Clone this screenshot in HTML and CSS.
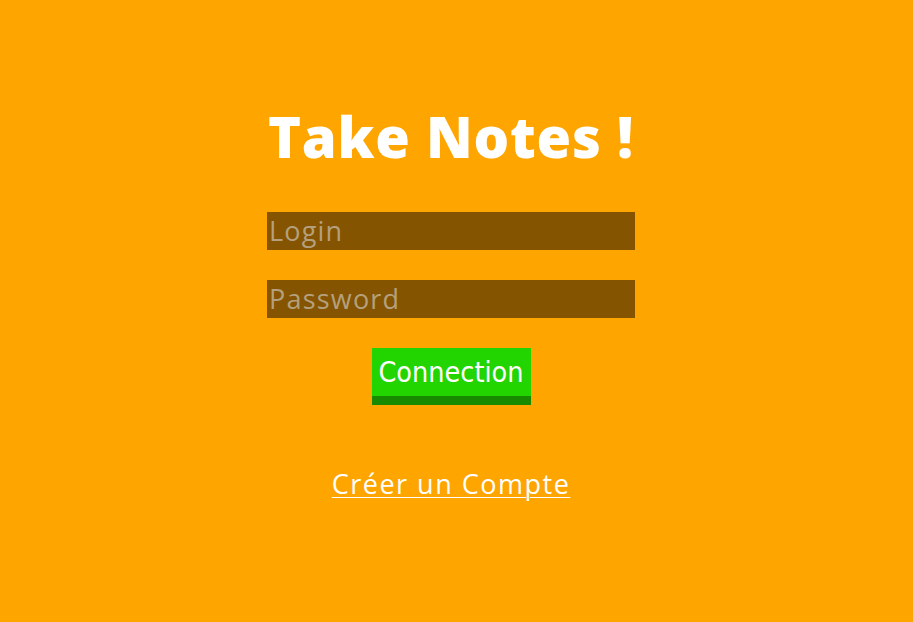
FILE: index.html
```html
<!DOCTYPE html>
<html lang="fr">
<head>
<meta charset="utf-8">
<title>Take Notes !</title>
<link rel="stylesheet" href="styles.css">
</head>
<body>
<main class="page">
  <h1 class="title">Take Notes !</h1>
  <form class="form">
    <input class="field" type="text" placeholder="Login">
    <input class="field" type="password" placeholder="Password">
    <button class="btn" type="button">Connection</button>
  </form>
  <a class="link" href="#">Créer un Compte</a>
</main>
</body>
</html>
```
FILE: styles.css
```css
html, body {
  margin: 0;
  padding: 0;
  background: #ffa500;
  height: 100%;
}
.page {
  display: flex;
  flex-direction: column;
  align-items: center;
  padding-top: 100px;
  padding-right: 11px;
  font-family: "Open Sans", "Noto Sans", sans-serif;
}
.title {
  margin: 0;
  color: #fff;
  font-family: "Open Sans", sans-serif;
  font-weight: 800;
  font-size: 56px;
  letter-spacing: 0.8px;
  line-height: 72px;
}
.form {
  display: flex;
  flex-direction: column;
  align-items: center;
  margin-top: 40px;
}
.field {
  box-sizing: border-box;
  width: 368px;
  height: 38px;
  border: none;
  margin: 0 0 30px 0;
  padding: 0 2px 2px 2px;
  background: #845400;
  color: #fff;
  font-family: "Open Sans", sans-serif;
  font-size: 27px;
  letter-spacing: 1.2px;
  outline: none;
}
.field::placeholder {
  color: #b5a07e;
}
.btn {
  box-sizing: border-box;
  width: 159px;
  height: 57px;
  border: none;
  border-bottom: 9px solid #178a00;
  background: #22d400;
  color: #fff;
  font-family: "DejaVu Sans Condensed", "DejaVu Sans", sans-serif;
  font-size: 28.5px;
  padding: 0;
  margin-top: 0;
}
.link {
  margin-top: 60px;
  color: #fff;
  font-size: 27px;
  letter-spacing: 1.5px;
  text-decoration: underline;
  text-decoration-thickness: 1px;
  text-underline-offset: 3px;
}
```
